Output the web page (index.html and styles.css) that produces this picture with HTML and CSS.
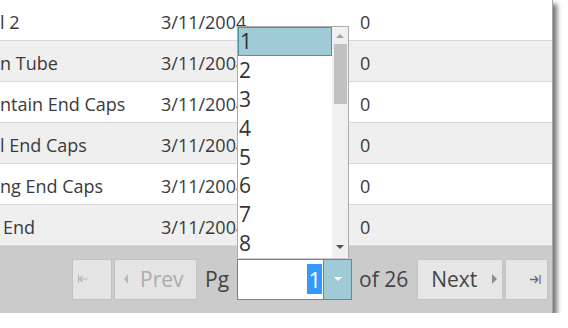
FILE: index.html
```html
<!DOCTYPE html>
<html lang="en">
<head>
    <meta charset="UTF-8">
    <title>Grid pager</title>
    <link rel="stylesheet" href="styles.css">
</head>
<body>
    <div class="frame">
        <div class="grid">
            <div class="row"><span class="name">l 2</span><span class="date">3/11/2004</span><span class="qty">0</span></div>
            <div class="row alt"><span class="name">n Tube</span><span class="date">3/11/2004</span><span class="qty">0</span></div>
            <div class="row"><span class="name">ntain End Caps</span><span class="date">3/11/2004</span><span class="qty">0</span></div>
            <div class="row alt"><span class="name">l End Caps</span><span class="date">3/11/2004</span><span class="qty">0</span></div>
            <div class="row"><span class="name">ng End Caps</span><span class="date">3/11/2004</span><span class="qty">0</span></div>
            <div class="row alt"><span class="name name-end">End</span><span class="date">3/11/2004</span><span class="qty">0</span></div>
        </div>

        <div class="pager">
            <button class="btn btn-first" disabled>
                <svg width="10" height="8" viewBox="0 0 10 8"><path d="M0.5 0v8M1.5 4h8M1.5 4l3-3M1.5 4l3 3" stroke="#b4b4b4" stroke-width="1.2" fill="none"/></svg>
            </button>
            <button class="btn btn-prev" disabled><span class="tri tri-left"></span>Prev</button>
            <span class="label">Pg</span>
            <div class="combo">
                <div class="combo-input"><span class="sel">1</span></div>
                <div class="combo-btn"><span class="tri-down"></span></div>
            </div>
            <span class="label">of 26</span>
            <button class="btn btn-next">Next<span class="tri tri-right"></span></button>
            <button class="btn btn-last">
                <svg width="11" height="9" viewBox="0 0 11 9"><path d="M0 4.5h8M8 4.5l-3.2-3.2M8 4.5l-3.2 3.2" stroke="#6a6a6a" stroke-width="1.3" fill="none"/><path d="M10 0v9" stroke="#5b7fb8" stroke-width="1.4"/></svg>
            </button>
        </div>

        <div class="popup">
            <ul class="items">
                <li class="active">1</li>
                <li>2</li>
                <li>3</li>
                <li>4</li>
                <li>5</li>
                <li>6</li>
                <li>7</li>
                <li>8</li>
            </ul>
            <div class="scrollbar">
                <span class="arrow-up"></span>
                <span class="thumb"></span>
                <span class="arrow-down"></span>
            </div>
        </div>
    </div>
</body>
</html>
```

FILE: styles.css
```css
body {
    margin: 0;
    background: #fff;
    font-family: 'Open Sans', 'Noto Sans', sans-serif;
    color: #333;
    overflow: hidden;
}
.frame {
    position: relative;
    width: 552px;
    border-right: 1px solid #a8a8a8;
    box-shadow: 4px 4px 5px rgba(0, 0, 0, 0.55);
}
.row {
    display: grid;
    grid-template-columns: 161px 199px 1fr;
    align-items: center;
    height: 40px;
    padding-top: 3px;
    box-sizing: content-box;
    height: 37px;
    border-bottom: 1px solid #d8d8d8;
    background: #fff;
    font-size: 18px;
    white-space: nowrap;
    color: #3a3a3a;
}
.row.alt {
    background: #efefef;
}
.name-end {
    padding-left: 3px;
}
.pager {
    display: flex;
    align-items: center;
    height: 67px;
    padding-left: 72px;
    box-sizing: border-box;
    background: #cbcbcb;
    font-size: 21px;
    color: #444;
}
.btn {
    height: 41px;
    display: flex;
    align-items: center;
    justify-content: center;
    padding: 0;
    border: 1px solid #c4c4c4;
    background: #e6e6e6;
    font-family: inherit;
    font-size: 21px;
    color: #444;
    margin-top: -1px;
}
.btn:disabled {
    color: #acacac;
    border-color: #c2c2c2;
    background: #e4e4e4;
}
.btn-first {
    width: 40px;
    justify-content: flex-start;
    padding-left: 5px;
}
.btn-prev {
    width: 83px;
    margin-left: 2px;
    justify-content: flex-start;
    padding-left: 9px;
}
.btn-next {
    width: 86px;
    margin-left: 9px;
    justify-content: flex-start;
    padding-left: 13px;
}
.btn-last {
    width: 43px;
    margin-left: 2px;
    justify-content: flex-end;
    padding-right: 6px;
}
.tri {
    display: inline-block;
    width: 0;
    height: 0;
    border-top: 5px solid transparent;
    border-bottom: 5px solid transparent;
}
.tri-left {
    border-right: 4px solid #b8b8b8;
    margin-right: 12px;
}
.tri-right {
    border-left: 5px solid #8c8c8c;
    margin-left: 15px;
}
.label {
    margin-left: 8px;
    margin-top: -2px;
}
.combo {
    display: flex;
    margin-left: 8px;
    margin-top: -1px;
    height: 41px;
    box-sizing: border-box;
    border: 1px solid #4796a6;
    background: #fff;
}
.combo + .label {
    margin-left: 7px;
}
.combo-input {
    width: 85px;
    display: flex;
    align-items: center;
    justify-content: flex-end;
    padding-right: 1px;
    box-sizing: border-box;
}
.sel {
    background: #3399ff;
    color: #fff;
    font-size: 22px;
    line-height: 30px;
    padding: 0 1px;
}
.combo-btn {
    width: 27px;
    border-left: 1px solid #4796a6;
    background: #a0cad6;
    display: flex;
    align-items: center;
    justify-content: center;
}
.tri-down {
    width: 0;
    height: 0;
    border-left: 4px solid transparent;
    border-right: 4px solid transparent;
    border-top: 4px solid #fff;
}
.popup {
    position: absolute;
    left: 237px;
    top: 26px;
    width: 112px;
    height: 232px;
    box-sizing: border-box;
    border: 1px solid #acacac;
    border-bottom: none;
    background: #fff;
    display: flex;
    overflow: hidden;
}
.items {
    list-style: none;
    margin: 0;
    padding: 0;
    flex: 1;
    font-size: 21px;
    color: #333;
}
.items li {
    height: 28.9px;
    line-height: 29px;
    padding-left: 1px;
    box-sizing: border-box;
}
.items li.active {
    background: #a0cad6;
    border: 1px solid #4796a6;
    line-height: 27px;
    padding-left: 1px;
}
.scrollbar {
    width: 16px;
    background: #f0f0f0;
    display: flex;
    flex-direction: column;
    align-items: center;
}
.arrow-up {
    margin-top: 7px;
    width: 0;
    height: 0;
    border-left: 4px solid transparent;
    border-right: 4px solid transparent;
    border-bottom: 4px solid #a3a3a3;
}
.thumb {
    margin-top: 6px;
    width: 13px;
    height: 60px;
    background: #c1c1c1;
}
.arrow-down {
    margin-top: auto;
    margin-bottom: 9px;
    width: 0;
    height: 0;
    border-left: 4px solid transparent;
    border-right: 4px solid transparent;
    border-top: 4px solid #505050;
}
```
